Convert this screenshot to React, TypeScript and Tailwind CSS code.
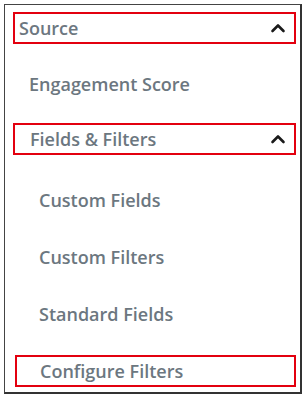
import React from "react";

function Chevron() {
  return (
    <svg width="16" height="10" viewBox="0 0 16 10" className="mr-[8px]">
      <path d="M2.5 8 L8 2.5 L13.5 8" fill="none" stroke="#1a1a1a" strokeWidth="2.6" strokeLinecap="round" strokeLinejoin="round" />
    </svg>
  );
}

export default function App() {
  const text = "text-[18px] font-semibold text-[#6c7780] leading-none";
  return (
    <div className="w-[306px] h-[398px] bg-white p-[4px]" style={{ fontFamily: '"Open Sans", sans-serif' }}>
      <div className="h-[390px] border-l border-t border-r-2 border-b-2 border-l-[#444] border-t-[#444] border-r-[#333] border-b-[#333] pl-[8px] pr-[4px] pt-[7px]">
        <div className="h-[32px] border-2 border-[#e3000f] flex items-center justify-between pl-[4px]">
          <span className={text}>Source</span>
          <Chevron />
        </div>
        <div className="h-[79px] flex items-center pl-[16px]">
          <span className={text}>Engagement Score</span>
        </div>
        <div className="h-[32px] border-2 border-[#e3000f] flex items-center justify-between pl-[15px]">
          <span className={text}>Fields &amp; Filters</span>
          <Chevron />
        </div>
        <div className="pt-[16px]">
          <div className="h-[57px] flex items-center pl-[26px]">
            <span className={text}>Custom Fields</span>
          </div>
          <div className="h-[57px] flex items-center pl-[26px]">
            <span className={text}>Custom Filters</span>
          </div>
          <div className="h-[57px] flex items-center pl-[26px]">
            <span className={text}>Standard Fields</span>
          </div>
        </div>
        <div className="mt-[13px] ml-[2px] h-[32px] border-2 border-[#e3000f] flex items-center pl-[23px]">
          <span className={text}>Configure Filters</span>
        </div>
      </div>
    </div>
  );
}
